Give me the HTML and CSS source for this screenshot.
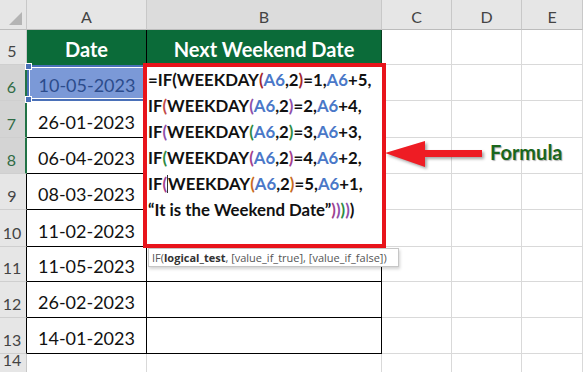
FILE: index.html
```html
<!DOCTYPE html>
<html>
<head>
<meta charset="utf-8">
<link rel="stylesheet" href="styles.css">
</head>
<body>
<div class="sheet">
  <div class="ch corner"><span class="tri"></span></div>
  <div class="ch">A</div>
  <div class="ch chsel">B</div>
  <div class="ch">C</div>
  <div class="ch">D</div>
  <div class="ch">E</div>

  <div class="rh">5</div>
  <div class="hd hda">Date</div>
  <div class="hd">Next Weekend Date</div>
  <div class="c"></div><div class="c"></div><div class="c"></div>

  <div class="rh rsel">6</div>
  <div class="dt sel">10-05-2023<span class="hdl h1"></span><span class="hdl h2"></span></div>
  <div class="c bx"></div>
  <div class="c"></div><div class="c"></div><div class="c"></div>

  <div class="rh rsel">7</div>
  <div class="dt">26-01-2023</div>
  <div class="c bx"></div>
  <div class="c"></div><div class="c"></div><div class="c"></div>

  <div class="rh rsel">8</div>
  <div class="dt">06-04-2023</div>
  <div class="c bx"></div>
  <div class="c"></div><div class="c"></div><div class="c"></div>

  <div class="rh rb">9</div>
  <div class="dt">08-03-2023</div>
  <div class="c bx"></div>
  <div class="c"></div><div class="c"></div><div class="c"></div>

  <div class="rh rb">10</div>
  <div class="dt">11-02-2023</div>
  <div class="c bx"></div>
  <div class="c"></div><div class="c"></div><div class="c"></div>

  <div class="rh rb">11</div>
  <div class="dt">11-05-2023</div>
  <div class="c bx"></div>
  <div class="c"></div><div class="c"></div><div class="c"></div>

  <div class="rh rb">12</div>
  <div class="dt">26-02-2023</div>
  <div class="c bx"></div>
  <div class="c"></div><div class="c"></div><div class="c"></div>

  <div class="rh rb">13</div>
  <div class="dt">14-01-2023</div>
  <div class="c bx"></div>
  <div class="c"></div><div class="c"></div><div class="c"></div>

  <div class="rh">14</div>
  <div class="c"></div><div class="c"></div>
  <div class="c"></div><div class="c"></div><div class="c"></div>

  <div class="editor">
    <div class="ln">=IF(WEEKDAY<span class="p1">(</span><span class="ref">A6</span>,2<span class="p1">)</span>=1,<span class="ref">A6</span>+5,</div>
    <div class="ln">IF<span class="p2">(</span>WEEKDAY<span class="p3">(</span><span class="ref">A6</span>,2<span class="p3">)</span>=2,<span class="ref">A6</span>+4,</div>
    <div class="ln">IF<span class="p3">(</span>WEEKDAY<span class="p4">(</span><span class="ref">A6</span>,2<span class="p4">)</span>=3,<span class="ref">A6</span>+3,</div>
    <div class="ln">IF<span class="p4">(</span>WEEKDAY<span class="p5">(</span><span class="ref">A6</span>,2<span class="p5">)</span>=4,<span class="ref">A6</span>+2,</div>
    <div class="ln">IF<span class="p5">(</span><span class="caret"></span>WEEKDAY<span class="p6">(</span><span class="ref">A6</span>,2<span class="p6">)</span>=5,<span class="ref">A6</span>+1,</div>
    <div class="ln">“It is the Weekend Date”<span class="p5">)</span><span class="p3">)</span><span class="p4">)</span><span class="p3">)</span>)</div>
  </div>
  <div class="tip">IF(<b>logical_test</b>, [value_if_true], [value_if_false])</div>

  <svg class="arrow" width="104" height="36" viewBox="0 0 104 36">
    <polygon points="2,15 42,3 42,12 99,12 99,19 42,19 42,29" fill="#ee1c24"/>
  </svg>
  <div class="label">Formula</div>
</div>
</body>
</html>
```

FILE: styles.css
```css
html, body {
  margin: 0;
  padding: 0;
  background: #ffffff;
  overflow: hidden;
}

.sheet {
  position: relative;
  display: grid;
  grid-template-columns: 27px 120px 235px 70px 70px 61px;
  grid-template-rows: 30px 35px 36px 37px 36px 36px 37px 35px 36px 36px 20px;
  width: 583px;
  height: 372px;
  font-family: Lato, "Liberation Sans", sans-serif;
}

.sheet > div {
  box-sizing: border-box;
}

.c {
  border-right: 1px solid #d9d9d9;
  border-bottom: 1px solid #d9d9d9;
}

.ch {
  background: #e6e6e6;
  border-right: 1px solid #c8c8c8;
  border-bottom: 1px solid #bcbcbc;
  color: #444;
  font-size: 16px;
  display: flex;
  align-items: flex-end;
  justify-content: center;
  padding-bottom: 3px;
}

.chsel {
  background: #dcdcdc;
}

.corner {
  position: relative;
}

.tri {
  position: absolute;
  right: 4px;
  bottom: 4px;
  width: 0;
  height: 0;
  border-left: 13px solid transparent;
  border-bottom: 13px solid #b4b4b4;
}

.rh {
  background: #e6e6e6;
  border-right: 1px solid #c8c8c8;
  border-bottom: 1px solid #cfcfcf;
  color: #444;
  font-size: 16px;
  display: flex;
  align-items: flex-end;
  justify-content: center;
  padding-bottom: 4px;
  padding-right: 2px;
}

.rh:last-of-type {
  align-items: flex-start;
  padding-top: 4px;
  padding-bottom: 0;
}

.rsel {
  background: #d4d4d4;
  color: #2f6b45;
  border-right: 2px solid #217346;
}

.rb {
  border-right: 1px solid #000;
}

.hd {
  background: #0b6b39;
  color: #ffffff;
  font-weight: 700;
  font-size: 20px;
  display: flex;
  align-items: flex-end;
  justify-content: center;
  padding-bottom: 4px;
  border-right: 1px solid #0a3f22;
}

.hda {
  border-right: 1px solid #000;
}

.dt {
  position: relative;
  border-right: 1px solid #000;
  border-bottom: 1px solid #000;
  color: #111;
  font-size: 18px;
  display: flex;
  align-items: flex-end;
  justify-content: center;
  padding-bottom: 4px;
}

.sel {
  background: #7b99d7;
  color: #2c4c8c;
  border: 2px solid #4a70b8;
  box-shadow: inset 0 0 0 1px #ffffff;
  padding-bottom: 3px;
}

.hdl {
  position: absolute;
  width: 5px;
  height: 5px;
  background: #4a70b8;
  border: 1px solid #ffffff;
  left: -4px;
}

.h1 { top: -4px; }
.h2 { bottom: -4px; }

.bx {
  border-right: 1px solid #000;
  border-bottom: 1px solid #000;
}

.editor {
  position: absolute;
  left: 143px;
  top: 63px;
  width: 243px;
  height: 185px;
  box-sizing: border-box;
  border: 4px solid #e8141b;
  background: #ffffff;
  padding: 0 0 0 1px;
  font-weight: 700;
  font-size: 16.8px;
  color: #111;
}

.ln {
  height: 26px;
  line-height: 26px;
  white-space: nowrap;
}

.ref { color: #4a78c8; }
.p1 { color: #a3282c; }
.p2 { color: #c44b4b; }
.p3 { color: #8e4faa; }
.p4 { color: #2e8b43; }
.p5 { color: #a2418e; }
.p6 { color: #c86b22; }

.caret {
  display: inline-block;
  width: 1px;
  height: 18px;
  background: #333;
  vertical-align: -3px;
}

.tip {
  position: absolute;
  left: 148px;
  top: 248px;
  width: 251px;
  height: 19px;
  box-sizing: border-box;
  background: #ffffff;
  border: 1px solid #c6c6c6;
  box-shadow: 1px 2px 3px rgba(0, 0, 0, 0.18);
  font-family: "Open Sans", "Noto Sans", sans-serif;
  font-size: 11px;
  line-height: 17px;
  color: #555;
  padding-left: 3px;
  white-space: nowrap;
}

.tip b {
  color: #333;
}

.arrow {
  position: absolute;
  left: 383px;
  top: 138px;
  filter: drop-shadow(2px 2px 1.5px rgba(0, 0, 0, 0.35));
}

.label {
  position: absolute;
  left: 490px;
  top: 140px;
  font-weight: 700;
  font-size: 20px;
  color: #1a661c;
  text-shadow: 1px 1px 1px rgba(0, 0, 0, 0.3);
}
```
